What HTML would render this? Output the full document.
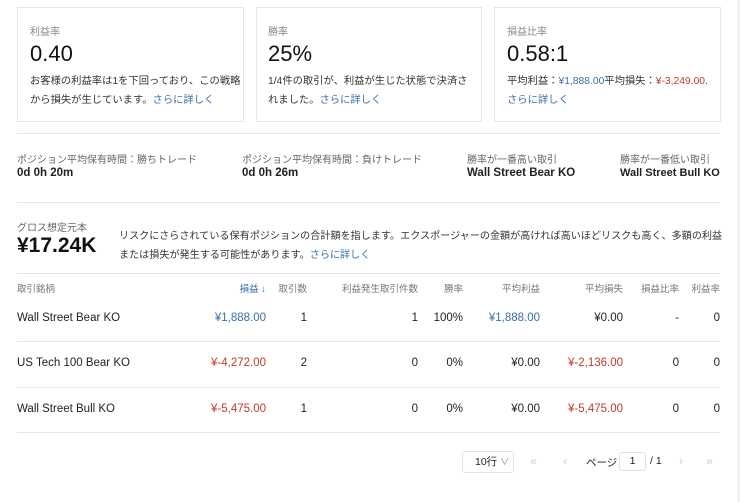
<!DOCTYPE html><html><head><meta charset="utf-8"><style>
body{margin:0;width:740px;height:502px;background:#fff;font-family:"Liberation Sans","Noto Sans CJK JP",sans-serif;color:#222;position:relative;overflow:hidden}
.a{position:absolute;white-space:nowrap}
.card{position:absolute;top:7px;height:115px;border:1px solid #e6e6e6;box-sizing:border-box}
.lbl{font-size:10px;color:#888}
.val{font-size:22px;color:#111}
.txt{font-size:10.3px;color:#333;line-height:19px;white-space:normal}
.th{font-size:9.5px;color:#777}
.td{font-size:11.5px;color:#222}
.R{text-align:right}
.b{color:#3a6ea8}.r{color:#c0392b}
.hr{position:absolute;left:17px;width:703px;height:1px;background:#e5e5e5}
</style></head><body>
<div class="card" style="left:17px;width:227px"></div>
<div class="card" style="left:256px;width:226px"></div>
<div class="card" style="left:494px;width:227px"></div>
<div class="a lbl" style="left:30px;top:23px">利益率</div>
<div class="a val" style="left:30px;top:41px">0.40</div>
<div class="a txt" style="left:30px;top:72px;width:212px">お客様の利益率は1を下回っており、この戦略から損失が生じています。<span class="b">さらに詳しく</span></div>
<div class="a lbl" style="left:268px;top:23px">勝率</div>
<div class="a val" style="left:268px;top:41px">25%</div>
<div class="a txt" style="left:268px;top:72px;width:206px">1/4件の取引が、利益が生じた状態で決済されました。<span class="b">さらに詳しく</span></div>
<div class="a lbl" style="left:507px;top:23px">損益比率</div>
<div class="a val" style="left:507px;top:41px">0.58:1</div>
<div class="a txt" style="left:507px;top:72px;width:210px">平均利益：<span class="b">¥1,888.00</span>平均損失：<span class="r">¥-3,249.00</span>.<br><span class="b">さらに詳しく</span></div>
<div class="hr" style="top:133px"></div>
<div class="a lbl" style="left:17px;top:151px;color:#666">ポジション平均保有時間：勝ちトレード</div>
<div class="a td" style="left:17px;top:167px;font-weight:600">0d 0h 20m</div>
<div class="a lbl" style="left:242px;top:151px;color:#666">ポジション平均保有時間：負けトレード</div>
<div class="a td" style="left:242px;top:167px;font-weight:600">0d 0h 26m</div>
<div class="a lbl" style="left:467px;top:151px;color:#666">勝率が一番高い取引</div>
<div class="a td" style="left:467px;top:167px;font-weight:600">Wall Street Bear KO</div>
<div class="a lbl" style="left:620px;top:151px;color:#666">勝率が一番低い取引</div>
<div class="a td" style="left:620px;top:167px;font-weight:600;font-size:11px">Wall Street Bull KO</div>
<div class="hr" style="top:202px"></div>
<div class="a lbl" style="left:17px;top:219px;color:#666">グロス想定元本</div>
<div class="a val" style="left:17px;top:234px;font-weight:bold;font-size:21px">¥17.24K</div>
<div class="a txt" style="left:119px;top:227px;width:605px;font-size:10.1px">リスクにさらされている保有ポジションの合計額を指します。エクスポージャーの金額が高ければ高いほどリスクも高く、多額の利益または損失が発生する可能性があります。<span class="b">さらに詳しく</span></div>
<div class="hr" style="top:273px"></div>
<div class="a th" style="left:17px;top:281px">取引銘柄</div>
<div class="a th R b" style="right:474px;top:281px">損益 ↓</div>
<div class="a th R" style="right:433px;top:281px">取引数</div>
<div class="a th R" style="right:322px;top:281px">利益発生取引件数</div>
<div class="a th R" style="right:277px;top:281px">勝率</div>
<div class="a th R" style="right:200px;top:281px">平均利益</div>
<div class="a th R" style="right:117px;top:281px">平均損失</div>
<div class="a th R" style="right:61px;top:281px">損益比率</div>
<div class="a th R" style="right:20px;top:281px">利益率</div>

<div class="a td" style="left:17px;top:312px">Wall Street Bear KO</div>
<div class="a td R b" style="right:474px;top:312px">¥1,888.00</div>
<div class="a td R" style="right:433px;top:312px">1</div>
<div class="a td R" style="right:322px;top:312px">1</div>
<div class="a td R" style="right:277px;top:312px">100%</div>
<div class="a td R b" style="right:200px;top:312px">¥1,888.00</div>
<div class="a td R" style="right:117px;top:312px">¥0.00</div>
<div class="a td R" style="right:61px;top:312px">-</div>
<div class="a td R" style="right:20px;top:312px">0</div>
<div class="hr" style="top:341px"></div>

<div class="a td" style="left:17px;top:357px">US Tech 100 Bear KO</div>
<div class="a td R r" style="right:474px;top:357px">¥-4,272.00</div>
<div class="a td R" style="right:433px;top:357px">2</div>
<div class="a td R" style="right:322px;top:357px">0</div>
<div class="a td R" style="right:277px;top:357px">0%</div>
<div class="a td R" style="right:200px;top:357px">¥0.00</div>
<div class="a td R r" style="right:117px;top:357px">¥-2,136.00</div>
<div class="a td R" style="right:61px;top:357px">0</div>
<div class="a td R" style="right:20px;top:357px">0</div>
<div class="hr" style="top:387px"></div>

<div class="a td" style="left:17px;top:403px">Wall Street Bull KO</div>
<div class="a td R r" style="right:474px;top:403px">¥-5,475.00</div>
<div class="a td R" style="right:433px;top:403px">1</div>
<div class="a td R" style="right:322px;top:403px">0</div>
<div class="a td R" style="right:277px;top:403px">0%</div>
<div class="a td R" style="right:200px;top:403px">¥0.00</div>
<div class="a td R r" style="right:117px;top:403px">¥-5,475.00</div>
<div class="a td R" style="right:61px;top:403px">0</div>
<div class="a td R" style="right:20px;top:403px">0</div>
<div class="hr" style="top:432px"></div>

<div class="a" style="left:462px;top:451px;width:52px;height:22px;border:1px solid #e3e3e3;border-radius:3px;box-sizing:border-box;font-size:10.5px;line-height:20px;padding-left:12px">10行 <span style="color:#888;font-size:9px">∨</span></div>
<div class="a" style="left:530px;top:454px;font-size:12px;color:#ccc">«</div>
<div class="a" style="left:563px;top:454px;font-size:12px;color:#ccc">‹</div>
<div class="a" style="left:586px;top:455px;font-size:10.5px">ページ</div>
<div class="a" style="left:619px;top:452px;width:27px;height:19px;border:1px solid #e3e3e3;border-radius:3px;box-sizing:border-box;font-size:10.5px;line-height:17px;text-align:center">1</div>
<div class="a" style="left:650px;top:455px;font-size:10.5px">/ 1</div>
<div class="a" style="left:679px;top:454px;font-size:12px;color:#ccc">›</div>
<div class="a" style="left:706px;top:454px;font-size:12px;color:#ccc">»</div>
<div class="a" style="left:737px;top:0;width:3px;height:502px;background:#f2f2f2"></div>
</body></html>
